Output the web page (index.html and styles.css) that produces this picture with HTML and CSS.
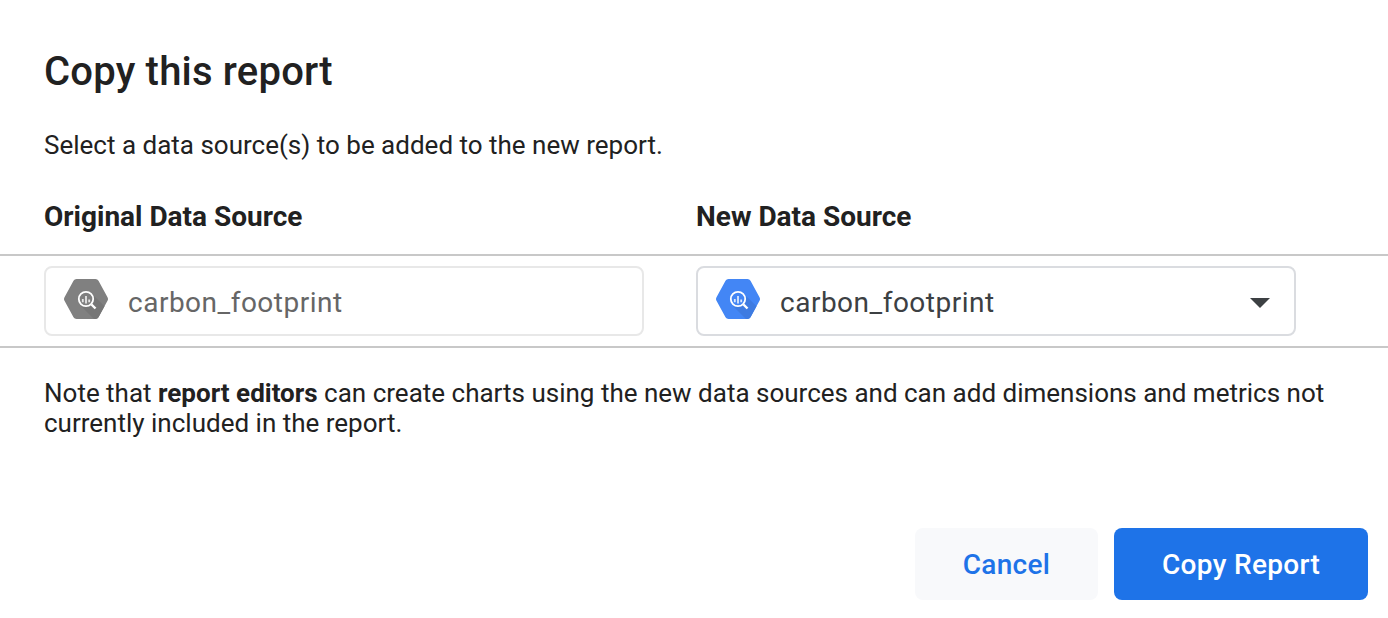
FILE: index.html
```html
<!DOCTYPE html>
<html lang="en">
<head>
<meta charset="utf-8">
<title>Copy this report</title>
<link rel="stylesheet" href="styles.css">
</head>
<body>
<main class="dialog">
  <h1 class="title">Copy this report</h1>
  <p class="intro">Select a data source(s) to be added to the new report.</p>
  <div class="heads"><h2 class="head">Original Data Source</h2><h2 class="head head-new">New Data Source</h2></div>
  <div class="sources">
    <div class="field field-disabled">
      <svg class="icon" viewBox="0 0 44 40"><path fill="#808080" d="M12.500 0h19q2 0 3 1.800l9 16.400q1 1.800 0 3.600l-9 16.400q-1 1.800-3 1.800h-19q-2 0-3-1.800L.500 21.800q-1-1.800 0-3.600l9-16.400Q10.500 0 12.500 0z"/><path fill="#767676" d="M28 15l12.500 12.300-6 10.900q-1 1.800-3 1.800H30L17 27l10-1z"/><circle cx="22" cy="20" r="7" fill="#808080"/><g fill="none" stroke="#fff"><circle cx="22" cy="20" r="7.200" stroke-width="1.800"/><path stroke-width="2.400" d="M27.500 25.500l4 4"/><path stroke-width="1.800" stroke-opacity=".8" d="M18.800 20v3.200M22 17v7.500M25.200 20.500v2.700"/></g></svg>
      <span class="name">carbon_footprint</span>
    </div>
    <div class="field">
      <svg class="icon" viewBox="0 0 44 40"><path fill="#4386f5" d="M12.500 0h19q2 0 3 1.800l9 16.400q1 1.800 0 3.600l-9 16.400q-1 1.800-3 1.800h-19q-2 0-3-1.800L.500 21.800q-1-1.800 0-3.600l9-16.400Q10.500 0 12.500 0z"/><path fill="#3e7be1" d="M28 15l12.500 12.300-6 10.900q-1 1.800-3 1.800H30L17 27l10-1z"/><circle cx="22" cy="20" r="7" fill="#4386f5"/><g fill="none" stroke="#fff"><circle cx="22" cy="20" r="7.200" stroke-width="1.800"/><path stroke-width="2.400" d="M27.500 25.500l4 4"/><path stroke-width="1.800" stroke-opacity=".8" d="M18.800 20v3.200M22 17v7.500M25.200 20.500v2.700"/></g></svg>
      <span class="name">carbon_footprint</span>
      <svg class="arrow" viewBox="0 0 20 10"><path fill="#3c4043" d="M0 0h20L10 10z"/></svg>
    </div>
  </div>
  <p class="note">Note that <b>report editors</b> can create charts using the new data sources and can add dimensions and metrics not currently included in the report.</p>
  <div class="actions"><button class="button cancel">Cancel</button><button class="button copy">Copy Report</button></div>
</main>
</body>
</html>
```
FILE: styles.css
```css
* { box-sizing: border-box; }
body { margin: 0; background: #fff; color: #212121; font-family: Roboto, sans-serif; }
.dialog { width: 1388px; height: 618px; padding-top: 48px; display: flex; flex-direction: column; overflow: hidden; }
.title { margin: 0 44px; font-size: 40px; font-weight: 500; line-height: 48px; letter-spacing: .2px; }
.intro { margin: 34px 44px 0; font-size: 26px; line-height: 30px; }
.heads { display: grid; grid-template-columns: 652px 1fr; margin: 40px 0 0 44px; }
.head { margin: 0; font-size: 28px; font-weight: 700; line-height: 34px; }
.sources { display: flex; gap: 52px; height: 94px; margin-top: 20px; padding: 10px 44px; border: solid #c8c8c8; border-width: 2px 0; }
.field { display: flex; align-items: center; width: 600px; height: 70px; padding: 0 24px 0 18px; border: 2px solid #dadce0; border-radius: 8px; color: #3c4043; font-size: 28px; letter-spacing: .5px; }
.field-disabled { border-color: #e8e8e8; color: #666; }
.icon { width: 44px; height: 40px; margin: -4px 20px 0 0; }
.name { line-height: 34px; padding-top: 4px; }
.arrow { width: 20px; height: 10px; margin: 4px 0 0 auto; }
.note { margin: 30px 44px 0; font-size: 26px; line-height: 30px; }
.actions { display: flex; justify-content: flex-end; gap: 16px; margin: 90px 20px 0; }
.button { height: 72px; border: 0; border-radius: 8px; font-family: inherit; font-size: 28px; font-weight: 500; letter-spacing: .32px; padding: 0; }
.cancel { width: 183px; background: #f8f9fb; color: #1e73e8; }
.copy { width: 254px; background: #1e73e8; color: #fff; }
```
